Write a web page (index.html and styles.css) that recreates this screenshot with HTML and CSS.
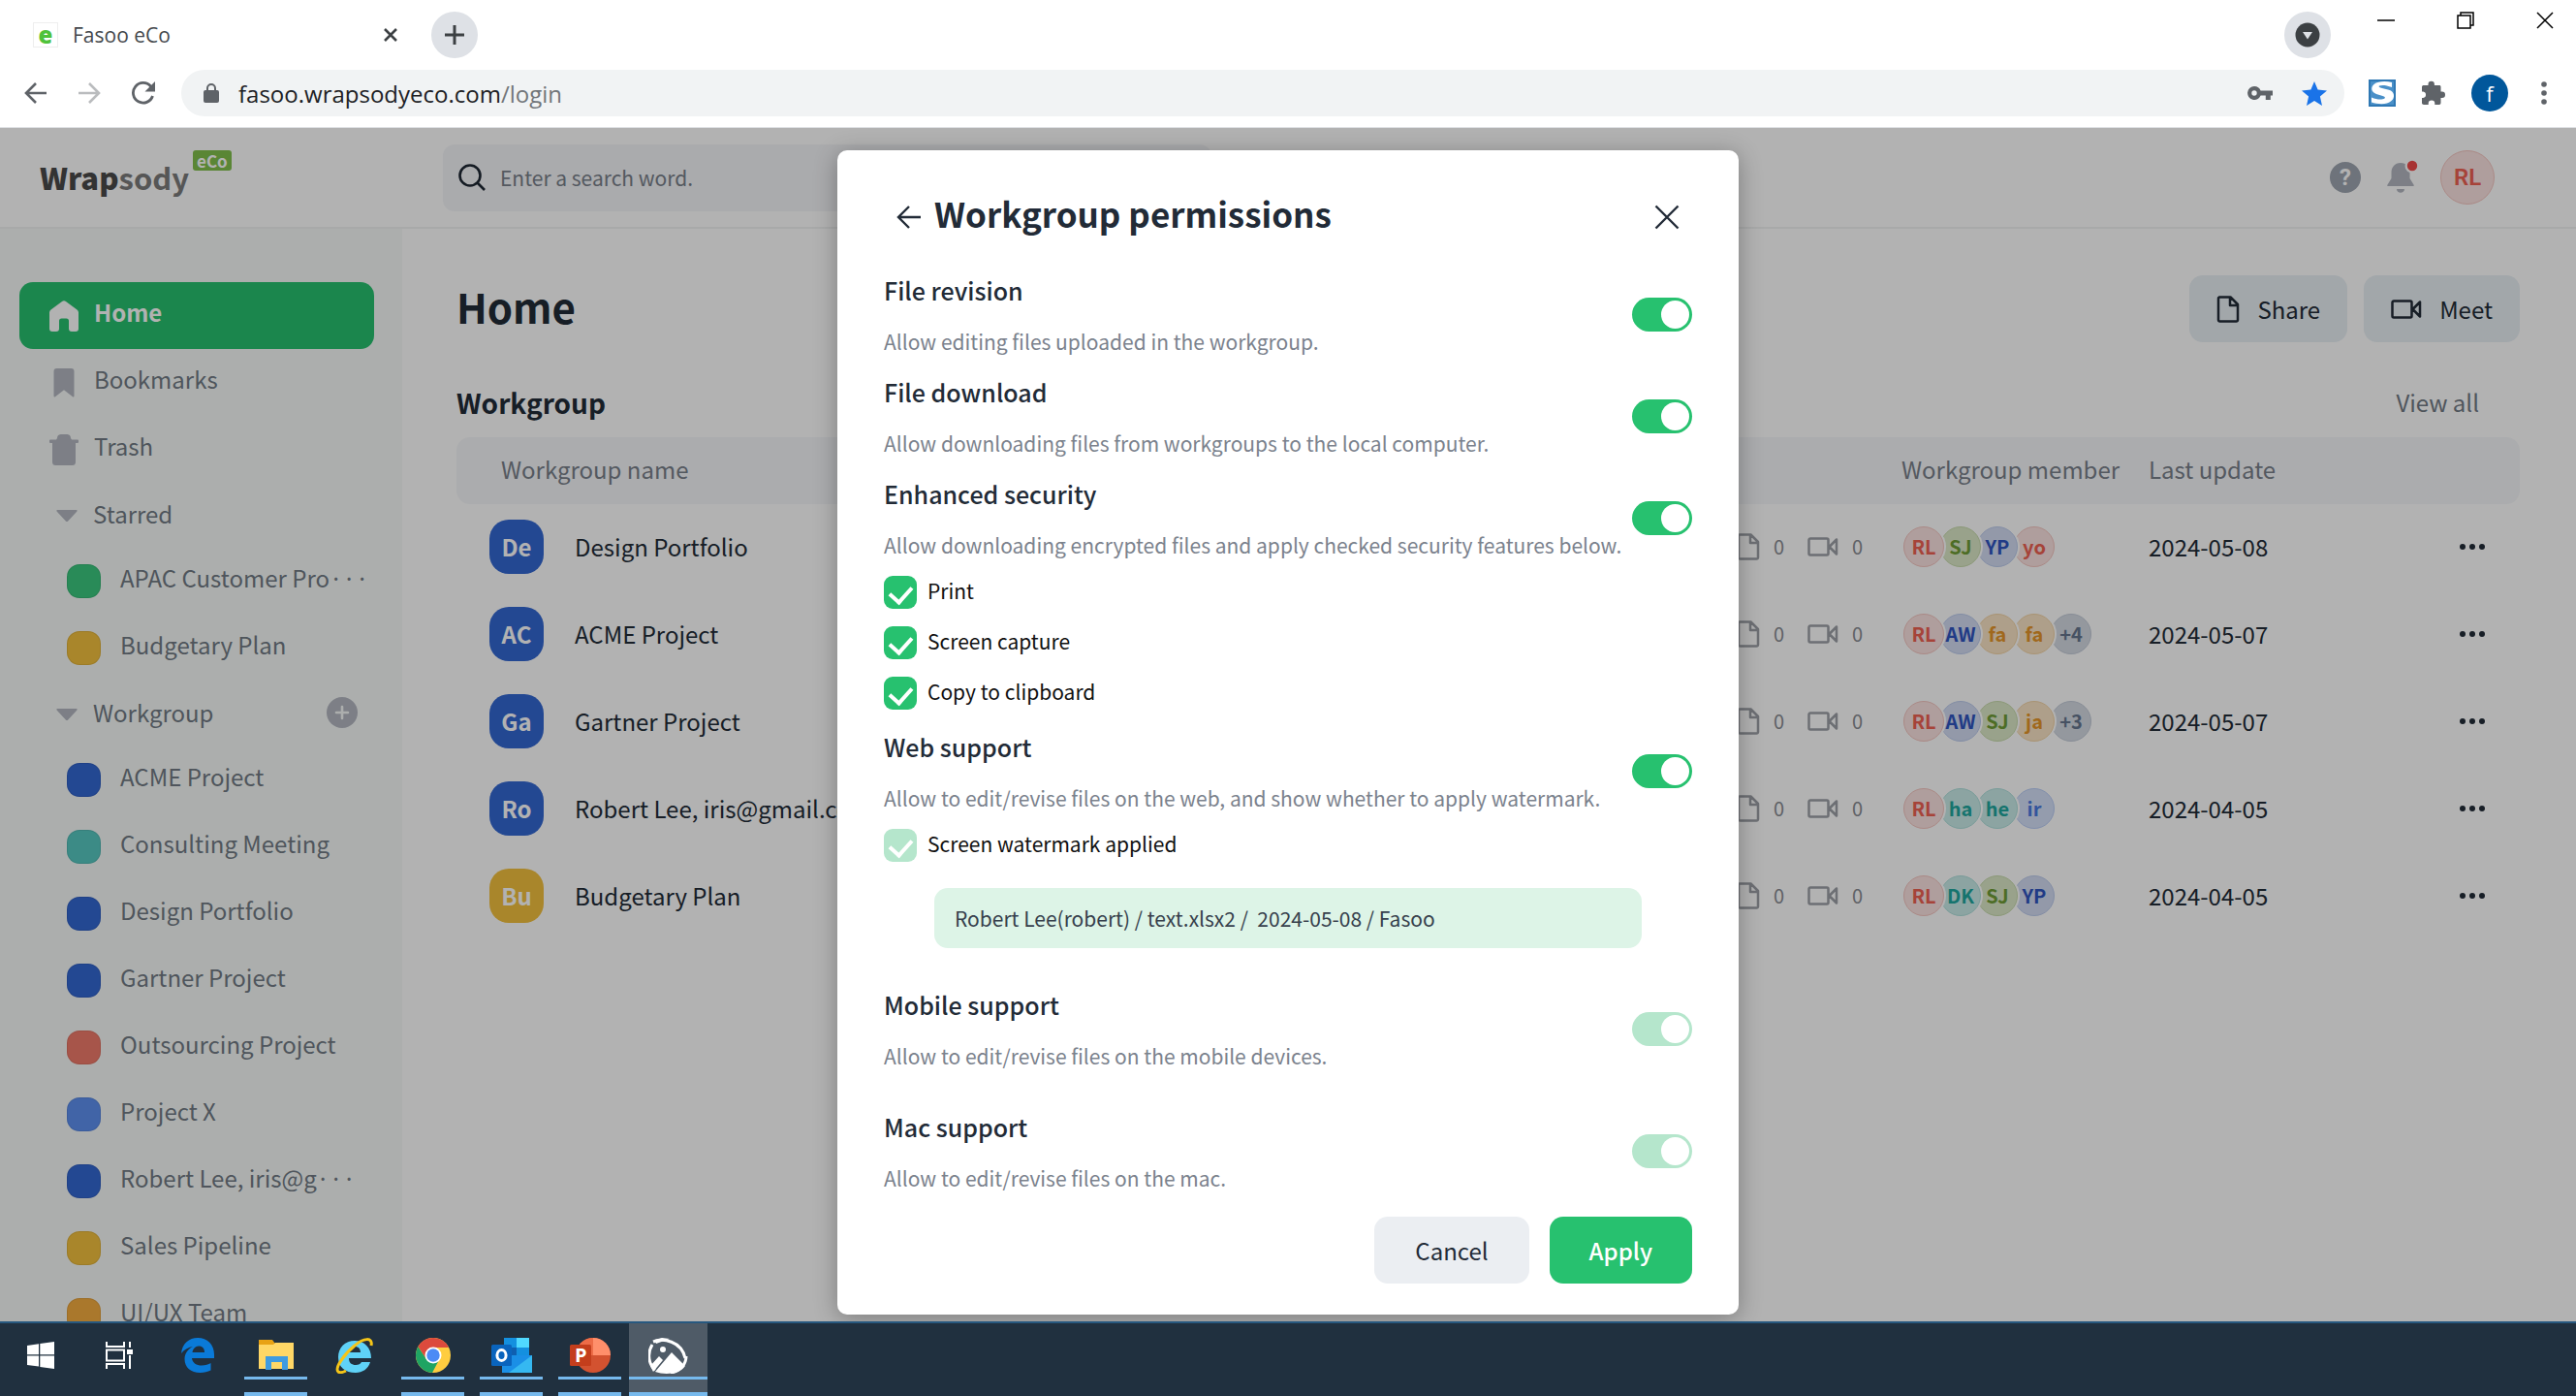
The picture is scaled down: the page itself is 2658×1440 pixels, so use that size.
FILE: index.html
```
<!DOCTYPE html>
<html lang="en">
<head>
    <meta charset="UTF-8">
    <meta name="viewport" content="width=device-width, initial-scale=1.0">
    <title>Fasoo eCo</title>
    <link rel="stylesheet" href="styles.css">
</head>
<body>
    <!-- icons used more than once -->
    <svg class="sprite" aria-hidden="true">
        <symbol id="doc" viewBox="0 0 24 28"><path d="M3 1.5h11.5L22 9v16a1.5 1.5 0 0 1-1.5 1.5h-17A1.500 1.500 0 0 1 2 25V3a1.500 1.500 0 0 1 1.500-1.500zM14 2v8h8" fill="none" stroke="currentColor" stroke-width="2.500" stroke-linejoin="round"/></symbol>
        <symbol id="cam" viewBox="0 0 32 20"><path d="M3 1.500h17a1.500 1.500 0 0 1 1.500 1.500v14a1.500 1.500 0 0 1-1.500 1.500H3A1.500 1.500 0 0 1 1.500 17V3A1.500 1.500 0 0 1 3 1.500zM30 2.500v15l-7.500-7.500z" fill="none" stroke="currentColor" stroke-width="2.500" stroke-linejoin="round"/></symbol>
        <symbol id="dots" viewBox="0 0 28 8"><g fill="currentColor"><circle cx="4" cy="4" r="3"/><circle cx="14" cy="4" r="3"/><circle cx="24" cy="4" r="3"/></g></symbol>
        <symbol id="caret" viewBox="0 0 22 12"><path d="M1.500 0h19c1.300 0 1.500 1 .7 1.800l-9 9.600c-.7.700-1.700.700-2.400 0l-9-9.600C0 1 .200 0 1.500 0z" fill="currentColor"/></symbol>
    </svg>

    <header class="browser">
        <div class="tabs">
            <div class="tab">
                <span class="favicon">e</span>
                <span class="tab-title">Fasoo eCo</span>
                <button class="plain" aria-label="Close tab"><svg width="16" height="16" viewBox="0 0 16 16"><path d="M2 2l12 12M14 2L2 14" stroke="#3c4043" stroke-width="2.600"/></svg></button>
            </div>
            <button class="round" aria-label="New tab"><svg width="22" height="22" viewBox="0 0 22 22"><path d="M11 1v20M1 11h20" stroke="#3c4043" stroke-width="3"/></svg></button>
            <div class="window-controls">
                <button class="round" aria-label="Search tabs"><svg width="26" height="26" viewBox="0 0 26 26"><circle cx="13" cy="13" r="12.500" fill="#3c4043"/><path d="M8 10h10l-5 7.500z" fill="#dee1e6"/></svg></button>
                <button class="plain win" aria-label="Minimize"><svg width="18" height="18" viewBox="0 0 18 18"><path d="M0 9h18" stroke="#000" stroke-width="1.500"/></svg></button>
                <button class="plain win" aria-label="Restore"><svg width="18" height="18" viewBox="0 0 18 18"><path d="M1 4h13v13H1zM4 4V1h13v13h-3" fill="none" stroke="#000" stroke-width="1.500"/></svg></button>
                <button class="plain win" aria-label="Close"><svg width="18" height="18" viewBox="0 0 18 18"><path d="M1 1l16 16M17 1L1 17" stroke="#000" stroke-width="1.500"/></svg></button>
            </div>
        </div>
        <div class="toolbar">
            <div class="nav-buttons">
                <button class="plain" aria-label="Back"><svg width="24" height="22" viewBox="0 0 24 22"><path d="M23 11H2M12 1L2 11l10 10" fill="none" stroke="#5f6368" stroke-width="2.600"/></svg></button>
                <button class="plain" aria-label="Forward"><svg width="24" height="22" viewBox="0 0 24 22"><path d="M1 11h21M12 1l10 10-10 10" fill="none" stroke="#babcbe" stroke-width="2.600"/></svg></button>
                <button class="plain" aria-label="Reload"><svg width="26" height="24" viewBox="0 0 26 24"><path d="M22.500 15A10.300 10.300 0 1 1 20.500 5l2 2.500" fill="none" stroke="#5f6368" stroke-width="2.800"/><path d="M25 0v10.500H14.500z" fill="#5f6368"/></svg></button>
            </div>
            <div class="address">
                <svg width="16" height="20" viewBox="0 0 16 20"><rect y="7" width="16" height="13" rx="2" fill="#5f6368"/><path d="M4 8V5a4 4 0 0 1 8 0v3" fill="none" stroke="#5f6368" stroke-width="2"/></svg>
                <span class="url">fasoo.wrapsodyeco.com<span class="path">/login</span></span>
                <svg width="26" height="14" viewBox="0 0 26 14"><path fill="#5f6368" fill-rule="evenodd" d="M7 0a7 7 0 0 1 6.600 4.600H26v5h-2.200V14h-5V9.600h-5.200A7 7 0 1 1 7 0zm0 4.300a2.700 2.700 0 1 0 0 5.400 2.700 2.700 0 0 0 0-5.400z"/></svg>
                <svg class="star" width="26" height="25" viewBox="0 0 26 25"><path fill="#1a73e8" d="M13 0l3.600 8.600 9.400.8-7.100 6.200L21 25l-8-4.900L5 25l2.100-9.400L0 9.400l9.400-.8z"/></svg>
            </div>
            <div class="extensions">
                <svg width="28" height="28" viewBox="0 0 28 28"><path d="M1 1h26v26H1z" fill="#4a90c8" stroke="#2f78b4" stroke-width="2"/><path d="M24 3v5c-6-2.500-11-2.500-13-1.500-1 .8 0 1.800 2 2.200l8 2c6 1.800 6.500 8 2.500 11.300-5 4.500-14 3.500-20.500 1.500v-5c6 2.500 11 2.500 13.500 1 1-1 0-2-2-2.500l-6.500-2C2.500 13 2 8 5.500 5 10 1.500 18 1.500 24 3z" fill="#fff"/></svg>
                <svg width="26" height="26" viewBox="0 0 26 26"><path fill="#5f6368" d="M1 6.500C1 5.500 2 5 3 5h4.500V4a3.200 3.200 0 0 1 6.400 0v1h5c1 0 1.600.7 1.600 1.600v5h1.300a3.200 3.200 0 0 1 0 6.400h-1.300v5c0 1-.7 2-1.600 2h-4.600v-1.300a3.300 3.300 0 0 0-6.600 0V25H3c-1 0-2-.7-2-1.700V18h1.300a3.300 3.300 0 0 0 0-6.500H1z"/></svg>
                <span class="profile">f</span>
                <button class="plain" aria-label="Menu"><svg width="6" height="24" viewBox="0 0 6 24"><g fill="#5f6368"><circle cx="3" cy="3" r="2.800"/><circle cx="3" cy="12" r="2.800"/><circle cx="3" cy="21" r="2.800"/></g></svg></button>
            </div>
        </div>
    </header>

    <div class="app">
        <header class="app-header">
            <div class="logo"><span><b>Wrap</b>sody</span><span class="logo-badge">eCo</span></div>
            <label class="search">
                <svg width="28" height="28" viewBox="0 0 28 28"><circle cx="12" cy="12" r="10.500" fill="none" stroke="#1e2733" stroke-width="2.600"/><path d="M19.500 19.500L27 27" stroke="#1e2733" stroke-width="2.600"/></svg>
                <input type="text" placeholder="Enter a search word." aria-label="Search">
            </label>
            <div class="account">
                <button class="help" aria-label="Help">?</button>
                <button class="plain" aria-label="Notifications"><svg width="34" height="36" viewBox="0 0 34 36"><path fill="#b3b7c1" d="M15 3c6 0 9.500 4.500 9.500 10v6l4 6.500c.6 1 .2 1.500-.8 1.500H2.300c-1 0-1.400-.5-.8-1.500l4-6.500v-6C5.500 7.500 9 3 15 3zM11 30h8c0 5-8 5-8 0z"/><circle cx="27" cy="6" r="7.500" fill="#fff"/><circle cx="27" cy="6" r="5.200" fill="#f04a4a"/></svg></button>
                <span class="user">RL</span>
            </div>
        </header>

        <div class="columns">
            <nav class="sidebar">
                <a class="item active" href="#">
                    <svg class="icon" width="30" height="32" viewBox="0 0 30 32"><path fill="#fff" d="M13 1a3.500 3.500 0 0 1 4 0l11.500 8.500A3.500 3.500 0 0 1 30 12.500V29a3 3 0 0 1-3 3h-4a3 3 0 0 1-3-3v-8a2.500 2.500 0 0 0-2.500-2.500h-5A2.500 2.500 0 0 0 10 21v8a3 3 0 0 1-3 3H3a3 3 0 0 1-3-3V12.500a3.500 3.500 0 0 1 1.500-3z"/></svg>
                    <span class="text">Home</span>
                </a>
                <a class="item" href="#">
                    <svg class="icon" width="30" height="30" viewBox="0 0 30 30"><path fill="currentColor" d="M7.500 0h15A3 3 0 0 1 25.500 3v25.500c0 1-.8 1.300-1.500.7l-9-7-9 7c-.7.600-1.500.3-1.500-.7V3a3 3 0 0 1 3-3z"/></svg>
                    <span class="text">Bookmarks</span>
                </a>
                <a class="item" href="#">
                    <svg class="icon" width="30" height="32" viewBox="0 0 30 32"><path fill="currentColor" d="M11.500 0h7A4 4 0 0 1 22 4l1 1.500h6a1 1 0 0 1 1 1V8a1 1 0 0 1-1 1h-2v19.500a3.500 3.500 0 0 1-3.500 3.500h-17A3.500 3.500 0 0 1 3 28.500V9H1a1 1 0 0 1-1-1V6.500a1 1 0 0 1 1-1h6L8 4a4 4 0 0 1 3.500-4z"/></svg>
                    <span class="text">Trash</span>
                </a>
                <div class="group">
                    <svg class="icon" width="22" height="12"><use href="#caret"/></svg>
                    <span class="text">Starred</span>
                </div>
                <a class="item sub" href="#"><i class="swatch green"></i><span class="text">APAC Customer Pro···</span></a>
                <a class="item sub" href="#"><i class="swatch yellow"></i><span class="text">Budgetary Plan</span></a>
                <div class="group">
                    <svg class="icon" width="22" height="12"><use href="#caret"/></svg>
                    <span class="text">Workgroup</span>
                    <button class="plain add" aria-label="Add workgroup"><svg width="32" height="32" viewBox="0 0 32 32"><circle cx="16" cy="16" r="16" fill="#b3b7c1"/><path d="M16 10v12M10 16h12" stroke="#f7faf8" stroke-width="2.600" stroke-linecap="round"/></svg></button>
                </div>
                <a class="item sub" href="#"><i class="swatch blue"></i><span class="text">ACME Project</span></a>
                <a class="item sub" href="#"><i class="swatch teal"></i><span class="text">Consulting Meeting</span></a>
                <a class="item sub" href="#"><i class="swatch blue"></i><span class="text">Design Portfolio</span></a>
                <a class="item sub" href="#"><i class="swatch blue"></i><span class="text">Gartner Project</span></a>
                <a class="item sub" href="#"><i class="swatch red"></i><span class="text">Outsourcing Project</span></a>
                <a class="item sub" href="#"><i class="swatch sky"></i><span class="text">Project X</span></a>
                <a class="item sub" href="#"><i class="swatch blue"></i><span class="text">Robert Lee, iris@g···</span></a>
                <a class="item sub" href="#"><i class="swatch yellow"></i><span class="text">Sales Pipeline</span></a>
                <a class="item sub" href="#"><i class="swatch orange"></i><span class="text">UI/UX Team</span></a>
            </nav>

            <main class="main">
                <div class="title-row">
                    <h1>Home</h1>
                    <div class="actions">
                        <button class="btn soft"><svg width="24" height="28"><use href="#doc"/></svg>Share</button>
                        <button class="btn soft"><svg width="32" height="20"><use href="#cam"/></svg>Meet</button>
                    </div>
                </div>
                <div class="section-row">
                    <h2>Workgroup</h2>
                    <a class="view-all" href="#">View all</a>
                </div>
                <table class="groups">
                    <colgroup><col><col class="col-counts"><col class="col-members"><col class="col-date"><col class="col-more"></colgroup>
                    <thead>
                        <tr><th class="first">Workgroup name</th><th></th><th>Workgroup member</th><th>Last update</th><th></th></tr>
                    </thead>
                    <tbody>
                        <tr>
                            <td><div class="name"><span class="badge blue">De</span>Design Portfolio</div></td>
                            <td><div class="counts"><svg width="24" height="28"><use href="#doc"/></svg><span>0</span><svg width="32" height="20"><use href="#cam"/></svg><span>0</span></div></td>
                            <td><div class="members"><span class="m-red">RL</span><span class="m-green">SJ</span><span class="m-blue">YP</span><span class="m-red">yo</span></div></td>
                            <td>2024-05-08</td>
                            <td><button class="plain" aria-label="More"><svg width="28" height="8"><use href="#dots"/></svg></button></td>
                        </tr>
                        <tr>
                            <td><div class="name"><span class="badge blue">AC</span>ACME Project</div></td>
                            <td><div class="counts"><svg width="24" height="28"><use href="#doc"/></svg><span>0</span><svg width="32" height="20"><use href="#cam"/></svg><span>0</span></div></td>
                            <td><div class="members"><span class="m-red">RL</span><span class="m-blue">AW</span><span class="m-orange">fa</span><span class="m-orange">fa</span><span class="m-gray">+4</span></div></td>
                            <td>2024-05-07</td>
                            <td><button class="plain" aria-label="More"><svg width="28" height="8"><use href="#dots"/></svg></button></td>
                        </tr>
                        <tr>
                            <td><div class="name"><span class="badge blue">Ga</span>Gartner Project</div></td>
                            <td><div class="counts"><svg width="24" height="28"><use href="#doc"/></svg><span>0</span><svg width="32" height="20"><use href="#cam"/></svg><span>0</span></div></td>
                            <td><div class="members"><span class="m-red">RL</span><span class="m-blue">AW</span><span class="m-green">SJ</span><span class="m-orange">ja</span><span class="m-gray">+3</span></div></td>
                            <td>2024-05-07</td>
                            <td><button class="plain" aria-label="More"><svg width="28" height="8"><use href="#dots"/></svg></button></td>
                        </tr>
                        <tr>
                            <td><div class="name"><span class="badge blue">Ro</span>Robert Lee, iris@gmail.com</div></td>
                            <td><div class="counts"><svg width="24" height="28"><use href="#doc"/></svg><span>0</span><svg width="32" height="20"><use href="#cam"/></svg><span>0</span></div></td>
                            <td><div class="members"><span class="m-red">RL</span><span class="m-teal">ha</span><span class="m-teal">he</span><span class="m-sky">ir</span></div></td>
                            <td>2024-04-05</td>
                            <td><button class="plain" aria-label="More"><svg width="28" height="8"><use href="#dots"/></svg></button></td>
                        </tr>
                        <tr>
                            <td><div class="name"><span class="badge yellow">Bu</span>Budgetary Plan</div></td>
                            <td><div class="counts"><svg width="24" height="28"><use href="#doc"/></svg><span>0</span><svg width="32" height="20"><use href="#cam"/></svg><span>0</span></div></td>
                            <td><div class="members"><span class="m-red">RL</span><span class="m-teal">DK</span><span class="m-green">SJ</span><span class="m-blue">YP</span></div></td>
                            <td>2024-04-05</td>
                            <td><button class="plain" aria-label="More"><svg width="28" height="8"><use href="#dots"/></svg></button></td>
                        </tr>
                    </tbody>
                </table>
            </main>
        </div>

        <div class="overlay">
            <form class="modal" role="dialog" aria-labelledby="modal-title">
                <div class="modal-head">
                    <button type="button" class="plain" aria-label="Back"><svg width="26" height="24" viewBox="0 0 26 24"><path d="M25 12H2M13 1L2 12l11 11" fill="none" stroke="#222b37" stroke-width="2.400"/></svg></button>
                    <h2 id="modal-title">Workgroup permissions</h2>
                    <button type="button" class="plain close" aria-label="Close"><svg width="26" height="26" viewBox="0 0 26 26"><path d="M1.500 1.500l23 23M24.500 1.500l-23 23" stroke="#222b37" stroke-width="2.400"/></svg></button>
                </div>

                <div class="perm">
                    <label for="revision"><strong>File revision</strong><span>Allow editing files uploaded in the workgroup.</span></label>
                    <input type="checkbox" class="toggle" id="revision" checked>
                </div>
                <div class="perm">
                    <label for="download"><strong>File download</strong><span>Allow downloading files from workgroups to the local computer.</span></label>
                    <input type="checkbox" class="toggle" id="download" checked>
                </div>
                <div class="perm">
                    <label for="security"><strong>Enhanced security</strong><span>Allow downloading encrypted files and apply checked security features below.</span></label>
                    <input type="checkbox" class="toggle" id="security" checked>
                </div>
                <label class="check"><input type="checkbox" checked>Print</label>
                <label class="check"><input type="checkbox" checked>Screen capture</label>
                <label class="check"><input type="checkbox" checked>Copy to clipboard</label>
                <div class="perm">
                    <label for="web"><strong>Web support</strong><span>Allow to edit/revise files on the web, and show whether to apply watermark.</span></label>
                    <input type="checkbox" class="toggle" id="web" checked>
                </div>
                <label class="check"><input type="checkbox" checked disabled>Screen watermark applied</label>
                <p class="watermark">Robert Lee(robert) / text.xlsx2 /&nbsp; 2024-05-08 / Fasoo</p>
                <div class="perm spaced">
                    <label for="mobile"><strong>Mobile support</strong><span>Allow to edit/revise files on the mobile devices.</span></label>
                    <input type="checkbox" class="toggle" id="mobile" checked disabled>
                </div>
                <div class="perm">
                    <label for="mac"><strong>Mac support</strong><span>Allow to edit/revise files on the mac.</span></label>
                    <input type="checkbox" class="toggle" id="mac" checked disabled>
                </div>
                <div class="modal-actions">
                    <button type="button" class="btn cancel">Cancel</button>
                    <button type="button" class="btn apply">Apply</button>
                </div>
            </form>
        </div>
    </div>

    <footer class="taskbar">
        <button class="task" aria-label="Start"><svg width="28" height="28" viewBox="0 0 28 28"><path fill="#fff" d="M0 4l12-1.700V13.300H0zM13.300 2L28 0v13.300H13.300zM0 14.600h12v11L0 24zM13.300 14.600H28V28l-14.700-2z"/></svg></button>
        <button class="task" aria-label="Task view"><svg width="28" height="28" viewBox="0 0 28 28"><path d="M1 0v5h18V0M1 28v-5h18v5M1 8.500h18v11H1zM25 0v6M25 14v14" fill="none" stroke="#fff" stroke-width="2"/><path d="M22 8h6v5h-6z" fill="#fff"/></svg></button>
        <button class="task" aria-label="Edge"><svg width="34" height="36" viewBox="0 0 34 36"><path fill="#0a7ad8" d="M0 16C1 6 8 0 17 0c10 0 17 7 17 17v4H11c.5 5 5 7.500 10 7.500 4 0 7-1 9.500-2.500v7.500C27 35 24 36 19.500 36 10 36 3.500 30.500 3.500 22c0-6 3.500-10.500 8.500-13C8 9.500 3 12 0 16zm11.500-1H24c0-4-2-6.500-6-6.500-3.500 0-6 3-6.500 6.500z"/></svg></button>
        <button class="task open" aria-label="File Explorer"><svg width="38" height="32" viewBox="0 0 38 32"><path fill="#e8a214" d="M1 0h14l3 4v8H1z"/><path fill="#ffd766" d="M1 5h15l2-2h19v27H1z"/><path fill="#3f9be0" d="M8 17h23v14h-6v-8H14v8H8z"/></svg></button>
        <button class="task" aria-label="Internet Explorer"><svg width="40" height="38" viewBox="0 0 40 38"><path fill="#5fd2f7" d="M3 21C3 11 10 4 20 4s17 7 17 18H14c0 5 3 7 7 7 3 0 5-1 6-3h9c-2 7-8 11-15 11C10 37 3 31 3 21zm11-5h12c0-4-2.500-6-6-6s-6 2-6 6z"/><path fill="none" stroke="#f5c518" stroke-width="3" d="M37 9c2-9-8-8-17 0C9 18-1 32 3 36c2 1.500 5 .5 8-1"/></svg></button>
        <button class="task open" aria-label="Chrome"><svg width="38" height="38" viewBox="0 0 38 38"><circle cx="19" cy="19" r="18" fill="#ffcd40"/><path fill="#1fa463" d="M3.400 10A18 18 0 0 0 18 37l8-15-14 1z"/><path fill="#dc4a3d" d="M3.400 10L12 23l7-12h16A18 18 0 0 0 3.400 10z"/><circle cx="19" cy="19" r="8.500" fill="#fff"/><circle cx="19" cy="19" r="6.700" fill="#4c8bf5"/></svg></button>
        <button class="task open" aria-label="Outlook"><svg width="42" height="36" viewBox="0 0 42 36"><path fill="#1490df" d="M13 0h26v20H13z"/><path fill="#50d9ff" d="M26 0h13v10H26z"/><path fill="#0f5fb0" d="M13 10h13v12H13z"/><path fill="#1a8fe6" d="M11 18h31v18H11z"/><path fill="#35b8f1" d="M42 18L18 36h24z"/><rect y="7" width="21" height="22" rx="1.500" fill="#0a64bd"/><ellipse cx="10.500" cy="18" rx="4.600" ry="5.500" fill="none" stroke="#fff" stroke-width="3"/></svg></button>
        <button class="task open" aria-label="PowerPoint"><svg width="42" height="36" viewBox="0 0 42 36"><circle cx="24" cy="18" r="18" fill="#d35230"/><path fill="#ff8f6b" d="M24 0a18 18 0 0 1 18 18H24z"/><path fill="#ed6c47" d="M24 0v18H6A18 18 0 0 1 24 0z"/><rect y="7" width="22" height="22" rx="1.500" fill="#c43e1c"/><text x="5" y="25" class="ppt">P</text></svg></button>
        <button class="task current" aria-label="Capture"><svg width="42" height="38" viewBox="0 0 42 38"><path d="M5 5c10-4 29-1 33 17M4 8c-6 10-3 21 3 26M39 20c0 8-6 16-16 17" fill="none" stroke="#fff" stroke-width="3"/><path d="M6 3l8-2 8 1-14 5z" fill="#fff"/><circle cx="15" cy="13" r="3" fill="#fff"/><path fill="#fff" d="M2 30l9-10 4 4L5 36zM7 36l17-20 14 14c-5 8-20 10-31 6z"/></svg></button>
    </footer>
</body>
</html>
```

FILE: styles.css
```
* {
    margin: 0;
    padding: 0;
    box-sizing: border-box;
}
body {
    display: flex;
    flex-direction: column;
    height: 100vh;
    overflow: hidden;
    background: #fff;
    color: #222b37;
    font-family: 'Noto Sans CJK KR', 'Noto Sans', sans-serif;
    font-size: 24px;
}
a {
    color: inherit;
    text-decoration: none;
}
button,
input {
    font: inherit;
    color: inherit;
}
svg {
    flex: none;
    display: block;
}
.sprite {
    position: absolute;
    width: 0;
    height: 0;
}
.plain {
    display: flex;
    border: none;
    background: none;
    cursor: pointer;
}

/* browser */
.browser {
    flex: none;
    height: 132px;
    border-bottom: 1px solid #dfe1e4;
    font-family: 'Open Sans', 'Noto Sans', sans-serif;
}
.tabs {
    display: flex;
    align-items: center;
    height: 72px;
}
.tab {
    display: flex;
    align-items: center;
    width: 445px;
    padding: 0 34px;
}
.favicon {
    width: 26px;
    margin-right: 15px;
    border: 1px solid #eee;
    color: #4fc23a;
    font-size: 24px;
    font-weight: 800;
    line-height: 24px;
    text-align: center;
}
.tab-title {
    flex: 1;
    color: #45494d;
    font-size: 21px;
}
.round {
    display: flex;
    align-items: center;
    justify-content: center;
    width: 48px;
    height: 48px;
    border: none;
    border-radius: 50%;
    background: #dee1e6;
}
.window-controls {
    display: flex;
    align-items: center;
    margin-left: auto;
}
.win {
    justify-content: flex-end;
    width: 82px;
    padding: 0 23px 30px 0;
}
.window-controls .round {
    margin-right: 7px;
}
.toolbar {
    display: flex;
    align-items: center;
    height: 48px;
}
.nav-buttons {
    display: flex;
    align-items: center;
    gap: 31px;
    width: 187px;
    padding-left: 25px;
}
.address {
    display: flex;
    flex: 1;
    align-items: center;
    height: 48px;
    padding: 0 18px 0 23px;
    border-radius: 24px;
    background: #f1f3f4;
}
.url {
    flex: 1;
    margin-left: 20px;
    color: #202124;
    font-size: 24px;
}
.path {
    color: #72767a;
}
.star {
    margin-left: 30px;
}
.extensions {
    display: flex;
    align-items: center;
    gap: 26px;
    width: 239px;
    padding-left: 25px;
}
.profile {
    width: 38px;
    border-radius: 50%;
    background: #01579b;
    color: #fff;
    font-size: 22px;
    line-height: 38px;
    text-align: center;
}
.extensions .plain {
    margin-left: 8px;
}

/* app */
.app {
    position: relative;
    display: flex;
    flex: 1;
    flex-direction: column;
    min-height: 0;
    overflow: hidden;
}
.app-header {
    display: flex;
    flex: none;
    align-items: center;
    height: 104px;
    padding: 0 84px 0 41px;
    border-bottom: 2px solid #f1f3f3;
}
.logo {
    display: flex;
    width: 416px;
    color: #7c7c7c;
    font-size: 31px;
    font-weight: 700;
    line-height: 56px;
}
.logo b {
    color: #4a4a4a;
}
.logo-badge {
    align-self: flex-start;
    margin-left: 4px;
    padding: 0 4px;
    border-radius: 3px;
    background: #81c04c;
    color: #fff;
    font-size: 17px;
    line-height: 21px;
}
.search {
    display: flex;
    align-items: center;
    gap: 15px;
    width: 793px;
    height: 69px;
    padding: 0 16px;
    border-radius: 12px;
    background: #f4f5f8;
}
.search input {
    flex: 1;
    border: none;
    outline: none;
    background: none;
    font-size: 21px;
}
.search input::placeholder {
    color: #79808a;
    opacity: 1;
}
.account {
    display: flex;
    align-items: center;
    margin-left: auto;
}
.help {
    width: 32px;
    height: 32px;
    margin-right: 26px;
    border: none;
    border-radius: 50%;
    background: #9ea5b0;
    color: #fff;
    font-family: Roboto, sans-serif;
    font-size: 24px;
    font-weight: 700;
    line-height: 32px;
}
.user {
    width: 56px;
    margin-left: 22px;
    border: 1px solid #f4c5c0;
    border-radius: 50%;
    background: #fbe3e1;
    color: #ee6152;
    font-family: Roboto, sans-serif;
    font-size: 24px;
    font-weight: 600;
    line-height: 54px;
    text-align: center;
}
.columns {
    display: flex;
    flex: 1;
    min-height: 0;
}

/* sidebar */
.sidebar {
    flex: none;
    width: 415px;
    padding: 55px 29px 0 20px;
    overflow: hidden;
    background: #f7faf8;
    color: #717a85;
    font-size: 24px;
}
.item,
.group {
    display: flex;
    align-items: center;
    height: 69px;
    padding-left: 31px;
    border-radius: 14px;
}
.sidebar .icon,
.swatch {
    flex: none;
    color: #b3b7c1;
}
.text {
    flex: 1;
    padding-bottom: 8px;
    margin-left: 16px;
    white-space: nowrap;
}
.active {
    background: #27c16f;
    color: #fff;
    font-weight: 700;
}
.group {
    height: 67px;
    padding: 0 17px 0 38px;
}
.group .text,
.add {
    padding-bottom: 4px;
}
.sub {
    padding-left: 49px;
}
.swatch {
    width: 35px;
    height: 35px;
    border: 1px solid rgba(0, 0, 0, 0.08);
    border-radius: 13px;
}
.sub .text {
    margin-left: 20px;
}
.blue { background: #3367d2; }
.green { background: #3bc77e; }
.yellow { background: #f2c03e; }
.teal { background: #56c7c1; }
.red { background: #f07a6a; }
.sky { background: #5d90f0; }
.orange { background: #f4ac3f; }

/* main */
.main {
    flex: 1;
    padding: 48px 58px 0 56px;
}
.title-row,
.section-row,
.actions {
    display: flex;
    align-items: center;
    justify-content: space-between;
}
h1 {
    padding-bottom: 6px;
    font-size: 42px;
    line-height: 62px;
}
.actions {
    gap: 17px;
}
.btn {
    display: flex;
    align-items: center;
    justify-content: center;
    height: 69px;
    border: none;
    border-radius: 14px;
    font-size: 24px;
    cursor: pointer;
}
.soft {
    gap: 18px;
    padding: 0 28px;
    background: #e8eff4;
}
.section-row {
    padding: 44px 42px 18px 0;
}
.section-row h2 {
    font-size: 28px;
    line-height: 36px;
}
.view-all {
    color: #717a85;
    line-height: 36px;
}
.groups {
    width: 100%;
    table-layout: fixed;
    border-spacing: 0;
}
.col-counts { width: 170px; }
.col-members { width: 255px; }
.col-date { width: 320px; }
.col-more { width: 63px; }
.groups th {
    height: 69px;
    padding-bottom: 4px;
    background: #f5f7fa;
    color: #79808a;
    font-weight: 400;
    text-align: left;
    white-space: nowrap;
}
.groups .first {
    padding-left: 46px;
    border-radius: 14px 0 0 14px;
}
.groups th:last-child {
    border-radius: 0 14px 14px 0;
}
.groups td {
    height: 90px;
    padding-bottom: 3px;
}
.name {
    display: flex;
    align-items: center;
    padding-left: 34px;
}
.badge {
    width: 56px;
    margin-right: 32px;
    border-radius: 20px;
    color: #fff;
    font-weight: 700;
    line-height: 56px;
    text-align: center;
}
.counts {
    display: flex;
    align-items: center;
    color: #9ca0a6;
    font-size: 20px;
}
.counts span {
    width: 34px;
    padding-left: 14px;
    color: #888c92;
}
.counts span + svg {
    margin-left: 15px;
}
.members {
    display: flex;
    padding-left: 2px;
}
.members span {
    position: relative;
    width: 42px;
    margin-right: -4px;
    border: 1px solid;
    border-radius: 50%;
    box-shadow: 0 0 0 2px #fff;
    font-size: 20px;
    font-weight: 700;
    line-height: 40px;
    text-align: center;
}
.members span:nth-child(1) { z-index: 5; }
.members span:nth-child(2) { z-index: 4; }
.members span:nth-child(3) { z-index: 3; }
.members span:nth-child(4) { z-index: 2; }
.members .m-red { background: #fbe3e1; border-color: #f4c5c0; color: #ee6152; }
.members .m-green { background: #dbe8c8; border-color: #c8dbac; color: #6f9c35; }
.members .m-blue { background: #d3dcf2; border-color: #bccbed; color: #3055c0; }
.members .m-sky { background: #d5e0f8; border-color: #b9ccf5; color: #4a7ae0; }
.members .m-orange { background: #f9e4c6; border-color: #f3d4a6; color: #e6962a; }
.members .m-teal { background: #c9ebe8; border-color: #aee0dc; color: #1fa79e; }
.members .m-gray { background: #d4dae3; border-color: #c3cbd8; color: #66768f; }

/* permissions dialog */
.overlay {
    position: absolute;
    inset: 0;
    z-index: 10;
    display: flex;
    align-items: flex-start;
    justify-content: center;
    padding-top: 23px;
    background: rgba(0, 0, 0, 0.3);
}
.modal {
    width: 930px;
    padding: 41px 48px 32px;
    border-radius: 10px;
    background: #fff;
    box-shadow: 0 4px 24px rgba(0, 0, 0, 0.3);
}
.modal-head {
    display: flex;
    align-items: center;
    gap: 13px;
    padding: 0 13px 28px;
}
.modal-head h2 {
    font-size: 35px;
    line-height: 48px;
}
.modal-head .plain {
    padding-top: 8px;
}
.close {
    margin-left: auto;
}
.perm {
    display: flex;
    align-items: center;
    justify-content: space-between;
}
.perm label {
    display: flex;
    flex-direction: column;
    gap: 17px;
    padding: 9px 0 7px;
    line-height: 36px;
    white-space: nowrap;
}
.perm strong {
    font-size: 25px;
    font-weight: 500;
}
.perm label span {
    color: #7b828d;
    font-size: 21px;
}
.spaced {
    margin: 31px 0 21px;
}
.toggle {
    flex: none;
    display: flex;
    align-items: center;
    justify-content: flex-end;
    width: 62px;
    height: 35px;
    padding: 3px;
    border-radius: 18px;
    background: #27c16f;
    appearance: none;
}
.toggle::before {
    content: '';
    width: 29px;
    height: 29px;
    border-radius: 50%;
    background: #fff;
}
.check {
    display: flex;
    align-items: center;
    gap: 11px;
    height: 52px;
    padding-bottom: 8px;
    color: #111;
    font-size: 21px;
}
.check input {
    display: flex;
    justify-content: center;
    width: 34px;
    height: 34px;
    margin-top: 3px;
    padding-top: 6px;
    border-radius: 9px;
    background: #27c16f;
    appearance: none;
}
.check input::before {
    content: '';
    width: 11px;
    height: 18px;
    border: solid #fff;
    border-width: 0 4px 4px 0;
    transform: rotate(42deg);
}
.toggle:disabled,
.check input:disabled {
    background: #b5e6cc;
}
.watermark {
    margin: 16px 52px 0;
    padding: 0 21px;
    border-radius: 14px;
    background: #ddf4e7;
    color: #36404c;
    font-size: 21px;
    line-height: 62px;
}
.modal-actions {
    display: flex;
    justify-content: flex-end;
    gap: 21px;
    margin-top: 15px;
}
.cancel {
    padding: 0 42px;
    background: #ebeef2;
}
.apply {
    padding: 0 41px;
    background: #27c16f;
    color: #fff;
    font-weight: 500;
}

/* taskbar */
.taskbar {
    display: flex;
    flex: none;
    height: 77px;
    padding-left: 1px;
    border-top: 2px solid #27587f;
    background: #20303f;
}
.task {
    position: relative;
    display: flex;
    align-items: center;
    justify-content: center;
    width: 81px;
    height: 75px;
    padding-bottom: 9px;
    border: none;
    background: none;
}
/* double line under running programs */
.open::after,
.current::after {
    content: '';
    position: absolute;
    right: 8px;
    bottom: 0;
    left: 8px;
    height: 13px;
    border: solid #76b9ed;
    border-width: 3px 0 4px;
}
.current {
    background: #4f5b67;
}
.current::after {
    right: 0;
    left: 0;
}
.ppt {
    fill: #fff;
    font: 700 20px 'Open Sans', sans-serif;
}
```
